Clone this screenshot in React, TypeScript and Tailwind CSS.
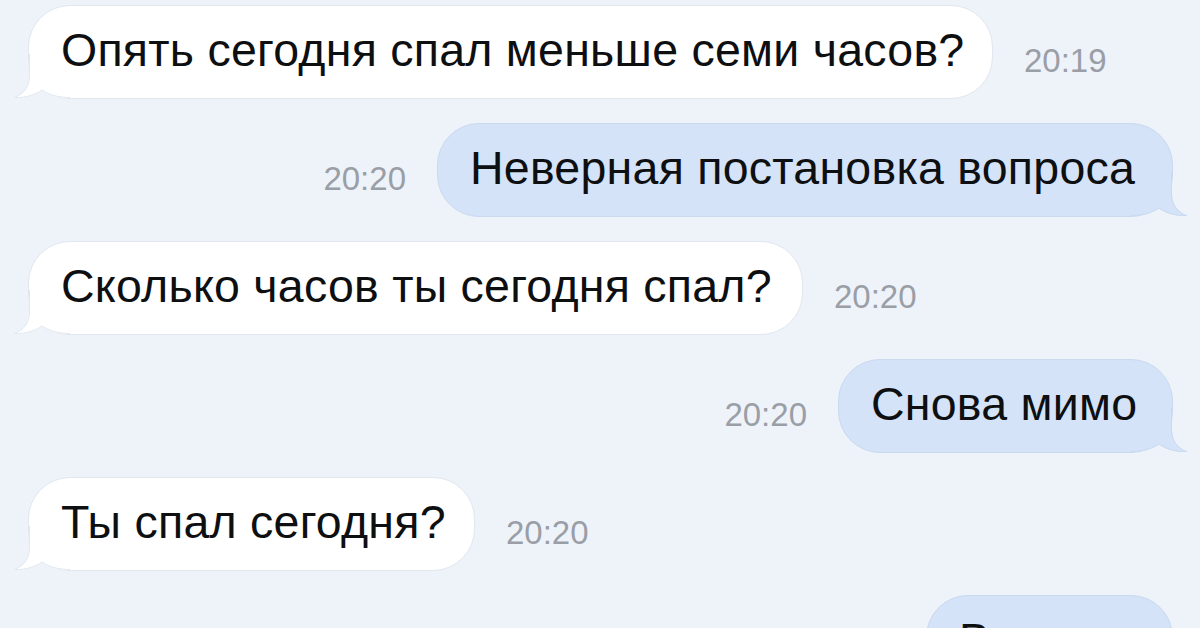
const messages = [
  { id: 1, out: false, text: "Опять сегодня спал меньше семи часов?", time: "20:19", width: "w-[965px]" },
  { id: 2, out: true, text: "Неверная постановка вопроса", time: "20:20", width: "w-[736px]" },
  { id: 3, out: false, text: "Сколько часов ты сегодня спал?", time: "20:20", width: "w-[775px]" },
  { id: 4, out: true, text: "Снова мимо", time: "20:20", width: "w-[335px]" },
  { id: 5, out: false, text: "Ты спал сегодня?", time: "20:20", width: "w-[447px]" },
  { id: 6, out: true, text: "Вчера", time: "", width: "w-[247px]" },
];

function Tail({ out }: { out: boolean }) {
  const fill = out ? "#d4e3f8" : "#ffffff";
  const edge = out ? "#c9d9ef" : "#e1e7ef";
  return (
    <svg
      width="56"
      height="44"
      viewBox="0 0 56 44"
      className={
        out
          ? "absolute bottom-0 right-[-15px] -scale-x-100"
          : "absolute bottom-0 left-[-15px]"
      }>
      <path
        d="M15 0 L15 22 C15 33 9 40 0 44 C11 44.5 21 41.5 28 36.5 C35 41 43 44 56 44 L56 0 Z"
        fill={fill}
      />
      <path
        d="M15.5 0 L15.5 22 C15.5 33 9.5 40 0.5 43.5 C11 44 21 41 28 36 C35 40.5 43 43.5 56 43.5"
        fill="none"
        stroke={edge}
        strokeWidth="1"
      />
    </svg>
  );
}

function Bubble({ out, text, width }: { out: boolean; text: string; width: string }) {
  return (
    <div
      className={`relative h-[94px] ${width} flex items-center rounded-[42px] border whitespace-nowrap pl-[32px] ${
        out ? "bg-[#d4e3f8] border-[#c9d9ef]" : "bg-white border-[#e1e7ef]"
      }`}>
      <Tail out={out} />
      <span className="relative -mt-[3px] text-[46.5px] leading-none text-[#0e0f11] tracking-[0.25px]">
        {text}
      </span>
    </div>
  );
}

function Time({ value }: { value: string }) {
  return (
    <span className="mt-[16px] text-[33px] leading-none text-[#9a9ea6]">
      {value}
    </span>
  );
}

export default function App() {
  return (
    <div
      className="h-[628px] w-[1200px] overflow-hidden bg-[#eef3fa] pt-[5px]"
      style={{ fontFamily: '"Liberation Sans", Arial, sans-serif' }}>
      <div className="flex flex-col gap-[24px]">
        {messages.map((m) =>
          m.out ? (
            <div key={m.id} className="flex items-center justify-end gap-[31px] pr-[27px]">
              {m.time && <Time value={m.time} />}
              <Bubble out text={m.text} width={m.width} />
            </div>
          ) : (
            <div key={m.id} className="flex items-center gap-[31px] pl-[28px]">
              <Bubble out={false} text={m.text} width={m.width} />
              <Time value={m.time} />
            </div>
          )
        )}
      </div>
    </div>
  );
}
